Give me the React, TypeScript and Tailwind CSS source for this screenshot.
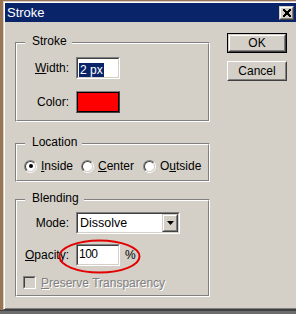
import type { ReactNode } from 'react';

const face = 'bg-[#d4d0c8]';

function Group({ label, gap, className, children }: { label: string; gap: string; className: string; children: ReactNode }) {
  return (
    <div className={`relative w-[195px] border border-t-[#808080] border-l-[#808080] border-b-white border-r-white ${className}`}>
      <span className={`absolute -top-[9px] left-[9px] pl-[7px] ${gap} ${face} leading-[14px]`}>{label}</span>
      <div className="h-full border border-t-white border-l-white border-b-[#808080] border-r-[#808080]">{children}</div>
    </div>
  );
}

function Sunken({ className, children }: { className: string; children?: ReactNode }) {
  return (
    <div className={`border border-t-[#808080] border-l-[#808080] border-b-white border-r-white ${className}`}>
      <div className="h-full border border-t-[#404040] border-l-[#404040] border-b-[#d4d0c8] border-r-[#d4d0c8] bg-white">{children}</div>
    </div>
  );
}

function Raised({ className, children }: { className: string; children?: ReactNode }) {
  return (
    <div className={`border border-t-[#d4d0c8] border-l-[#d4d0c8] border-b-[#404040] border-r-[#404040] ${className}`}>
      <div className={`h-full border border-t-white border-l-white border-b-[#808080] border-r-[#808080] ${face} flex items-center justify-center`}>
        {children}
      </div>
    </div>
  );
}

function Radio({ checked, children, className }: { checked?: boolean; children: ReactNode; className: string }) {
  return (
    <div className={`flex items-center gap-[4px] ${className}`}>
      <span className="w-[13px] h-[13px] rounded-full border border-t-[#808080] border-l-[#808080] border-b-white border-r-white">
        <span className="w-full h-full rounded-full border border-t-[#404040] border-l-[#404040] border-b-[#d4d0c8] border-r-[#d4d0c8] bg-white flex items-center justify-center">
          {checked && <span className="w-[4px] h-[4px] rounded-full bg-black" />}
        </span>
      </span>
      <span className="leading-[14px]">{children}</span>
    </div>
  );
}

export default function App() {
  return (
    <div className="w-[296px] h-[314px] overflow-hidden flex flex-col bg-[#6c6c6c] text-[12px] text-black font-['Liberation_Sans',Arial,sans-serif]">
      <div className="h-[310px] shrink-0 bg-[#9a7452] pl-[3px] pt-[1px]">
        {/* Window */}
        <div className={`w-[296px] h-[309px] flex flex-col border-t border-l border-r border-b border-t-[#d4d0c8] border-l-[#d4d0c8] border-r-[#404040] border-b-[#404040] p-[1px] ${face} shadow-[inset_1px_1px_0_#fff,inset_-1px_-1px_0_#808080]`}>
          {/* Title bar */}
          <div className="h-[19px] shrink-0 bg-[#0a246a] flex items-center justify-between pl-[2px] pr-[3px]">
            <span className="text-white text-[13px] leading-[19px]">Stroke</span>
            <Raised className="w-[15px] h-[14px]">
              <svg width="9" height="8" viewBox="0 0 9 8">
                <path d="M1 0.5 L8 7.5 M8 0.5 L1 7.5 M2 0.5 L9 7.5 M9 0.5 L2 7.5" stroke="#000" strokeWidth="1" shapeRendering="crispEdges" />
              </svg>
            </Raised>
          </div>

          {/* Body */}
          <div className="flex flex-1">
            <div className="pl-[10px] pt-[20px] flex flex-col">
              <Group label="Stroke" gap="pr-[5px]" className="h-[80px]">
                <div className="pt-[13px] flex flex-col">
                  <div className="flex items-center h-[22px]">
                    <span className="w-[53px] text-right pr-[1px]"><u>W</u>idth:</span>
                    <Sunken className="ml-[6px] w-[44px] h-[22px]">
                      <div className="pl-[1px] pt-[2px]">
                        <span className="bg-[#0a246a] text-white leading-[14px] px-[1px]">2 px</span>
                      </div>
                    </Sunken>
                  </div>
                  <div className="flex items-center h-[22px] mt-[12px]">
                    <span className="w-[53px] text-right pr-[1px]">Color:</span>
                    <div className="ml-[6px] w-[44px] h-[22px] border border-t-[#808080] border-l-[#808080] border-b-[#404040] border-r-[#404040]">
                      <div className="h-full border border-black bg-[#ff0000]" />
                    </div>
                  </div>
                </div>
              </Group>

              <Group label="Location" gap="pr-[5px]" className="h-[39px] mt-[21px]">
                <div className="flex items-center h-[14px] mt-[14px] pl-[7px]">
                  <Radio checked className="w-[57px]"><u>I</u>nside</Radio>
                  <Radio className="w-[62px]"><u>C</u>enter</Radio>
                  <Radio className="w-[62px]">O<u>u</u>tside</Radio>
                </div>
              </Group>

              <Group label="Blending" gap="pr-[5px]" className="h-[98px] mt-[17px]">
                <div className="pt-[11px] flex flex-col">
                  <div className="flex items-center h-[22px]">
                    <span className="w-[53px] text-right pr-[1px]">Mode:</span>
                    <Sunken className="ml-[6px] w-[104px] h-[22px]">
                      <div className="flex h-full">
                        <span className="flex-1 pl-[2px] leading-[18px] text-[12.5px]">Dissolve</span>
                        <Raised className="w-[16px] h-full">
                          <svg width="7" height="4" viewBox="0 0 7 4">
                            <path d="M0 0 H7 L3.5 4 Z" fill="#000" />
                          </svg>
                        </Raised>
                      </div>
                    </Sunken>
                  </div>
                  <div className="flex items-center h-[22px] mt-[10px]">
                    <span className="w-[53px] text-right pr-[1px]"><u>O</u>pacity:</span>
                    <Sunken className="ml-[6px] w-[44px] h-[22px]">
                      <span className="block pl-[1px] leading-[16px] tracking-[-0.5px]">100</span>
                    </Sunken>
                    <span className="ml-[5px]">%</span>
                  </div>
                  <div className="flex items-center h-[13px] mt-[10px] pl-[6px] gap-[5px]">
                    <Sunken className="w-[13px] h-[13px]">
                      <div className={`h-full ${face}`} />
                    </Sunken>
                    <span className="text-[#808080] leading-[14px] [text-shadow:1px_1px_0_#fff]"><u>P</u>reserve Transparency</span>
                  </div>
                </div>
                <svg className="absolute left-[42px] top-[39px]" width="83" height="35" viewBox="0 0 83 35">
                  <ellipse cx="41.5" cy="17.5" rx="40" ry="16" fill="none" stroke="#e30000" strokeWidth="2" />
                </svg>
              </Group>
            </div>

            <div className="ml-[17px] pt-[11px] flex flex-col">
              <div className="w-[60px] h-[20px] border border-black">
                <Raised className="h-full">OK</Raised>
              </div>
              <div className="w-[60px] h-[20px] mt-[8px] border border-t-white border-l-white border-b-[#404040] border-r-[#404040]">
                <div className={`h-full border border-t-[#d4d0c8] border-l-[#d4d0c8] border-b-[#808080] border-r-[#808080] ${face} flex items-center justify-center`}>
                  Cancel
                </div>
              </div>
            </div>
          </div>
        </div>
      </div>
      <div className="flex-1 border-t border-[#404040]" />
    </div>
  );
}
